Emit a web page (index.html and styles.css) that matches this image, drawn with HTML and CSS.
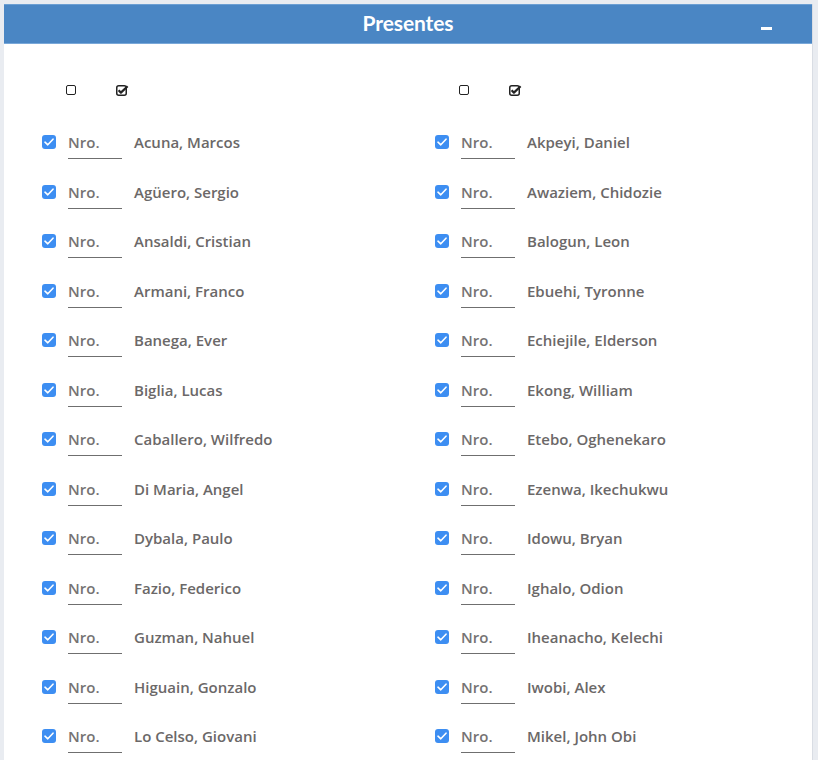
FILE: index.html
```html
<!DOCTYPE html>
<html lang="es">
<head>
<meta charset="utf-8">
<title>Presentes</title>
<link rel="stylesheet" href="styles.css">
</head>
<body>
<div class="page">
  <section class="card">
    <header class="card-head">
      <h2 class="card-title">Presentes</h2>
      <span class="collapse"></span>
    </header>
    <div class="card-body">
      <div class="col">
        <div class="tools">
          <span class="tool-box"></span>
          <svg class="tool-check" width="13" height="11" viewBox="0 0 13 11"><rect x="0.75" y="0.75" width="9.5" height="9.5" rx="2" fill="none" stroke="#222" stroke-width="1.5"/><path d="M2.6 5.3 L4.9 7.6 L11.6 1.2" fill="none" stroke="#222" stroke-width="2.2" stroke-linejoin="round"/></svg>
        </div>
        <ul class="list">
          <li class="row"><span class="cb"><svg width="10" height="8" viewBox="0 0 10 8"><path d="M1 4.2 L3.8 6.8 L9 1.2" fill="none" stroke="#fff" stroke-width="1.6" stroke-linecap="round" stroke-linejoin="round"/></svg></span><span class="nro">Nro.</span><span class="name">Acuna, Marcos</span></li>
          <li class="row"><span class="cb"><svg width="10" height="8" viewBox="0 0 10 8"><path d="M1 4.2 L3.8 6.8 L9 1.2" fill="none" stroke="#fff" stroke-width="1.6" stroke-linecap="round" stroke-linejoin="round"/></svg></span><span class="nro">Nro.</span><span class="name">Agüero, Sergio</span></li>
          <li class="row"><span class="cb"><svg width="10" height="8" viewBox="0 0 10 8"><path d="M1 4.2 L3.8 6.8 L9 1.2" fill="none" stroke="#fff" stroke-width="1.6" stroke-linecap="round" stroke-linejoin="round"/></svg></span><span class="nro">Nro.</span><span class="name">Ansaldi, Cristian</span></li>
          <li class="row"><span class="cb"><svg width="10" height="8" viewBox="0 0 10 8"><path d="M1 4.2 L3.8 6.8 L9 1.2" fill="none" stroke="#fff" stroke-width="1.6" stroke-linecap="round" stroke-linejoin="round"/></svg></span><span class="nro">Nro.</span><span class="name">Armani, Franco</span></li>
          <li class="row"><span class="cb"><svg width="10" height="8" viewBox="0 0 10 8"><path d="M1 4.2 L3.8 6.8 L9 1.2" fill="none" stroke="#fff" stroke-width="1.6" stroke-linecap="round" stroke-linejoin="round"/></svg></span><span class="nro">Nro.</span><span class="name">Banega, Ever</span></li>
          <li class="row"><span class="cb"><svg width="10" height="8" viewBox="0 0 10 8"><path d="M1 4.2 L3.8 6.8 L9 1.2" fill="none" stroke="#fff" stroke-width="1.6" stroke-linecap="round" stroke-linejoin="round"/></svg></span><span class="nro">Nro.</span><span class="name">Biglia, Lucas</span></li>
          <li class="row"><span class="cb"><svg width="10" height="8" viewBox="0 0 10 8"><path d="M1 4.2 L3.8 6.8 L9 1.2" fill="none" stroke="#fff" stroke-width="1.6" stroke-linecap="round" stroke-linejoin="round"/></svg></span><span class="nro">Nro.</span><span class="name">Caballero, Wilfredo</span></li>
          <li class="row"><span class="cb"><svg width="10" height="8" viewBox="0 0 10 8"><path d="M1 4.2 L3.8 6.8 L9 1.2" fill="none" stroke="#fff" stroke-width="1.6" stroke-linecap="round" stroke-linejoin="round"/></svg></span><span class="nro">Nro.</span><span class="name">Di Maria, Angel</span></li>
          <li class="row"><span class="cb"><svg width="10" height="8" viewBox="0 0 10 8"><path d="M1 4.2 L3.8 6.8 L9 1.2" fill="none" stroke="#fff" stroke-width="1.6" stroke-linecap="round" stroke-linejoin="round"/></svg></span><span class="nro">Nro.</span><span class="name">Dybala, Paulo</span></li>
          <li class="row"><span class="cb"><svg width="10" height="8" viewBox="0 0 10 8"><path d="M1 4.2 L3.8 6.8 L9 1.2" fill="none" stroke="#fff" stroke-width="1.6" stroke-linecap="round" stroke-linejoin="round"/></svg></span><span class="nro">Nro.</span><span class="name">Fazio, Federico</span></li>
          <li class="row"><span class="cb"><svg width="10" height="8" viewBox="0 0 10 8"><path d="M1 4.2 L3.8 6.8 L9 1.2" fill="none" stroke="#fff" stroke-width="1.6" stroke-linecap="round" stroke-linejoin="round"/></svg></span><span class="nro">Nro.</span><span class="name">Guzman, Nahuel</span></li>
          <li class="row"><span class="cb"><svg width="10" height="8" viewBox="0 0 10 8"><path d="M1 4.2 L3.8 6.8 L9 1.2" fill="none" stroke="#fff" stroke-width="1.6" stroke-linecap="round" stroke-linejoin="round"/></svg></span><span class="nro">Nro.</span><span class="name">Higuain, Gonzalo</span></li>
          <li class="row"><span class="cb"><svg width="10" height="8" viewBox="0 0 10 8"><path d="M1 4.2 L3.8 6.8 L9 1.2" fill="none" stroke="#fff" stroke-width="1.6" stroke-linecap="round" stroke-linejoin="round"/></svg></span><span class="nro">Nro.</span><span class="name">Lo Celso, Giovani</span></li>
        </ul>
      </div>
      <div class="col">
        <div class="tools">
          <span class="tool-box"></span>
          <svg class="tool-check" width="13" height="11" viewBox="0 0 13 11"><rect x="0.75" y="0.75" width="9.5" height="9.5" rx="2" fill="none" stroke="#222" stroke-width="1.5"/><path d="M2.6 5.3 L4.9 7.6 L11.6 1.2" fill="none" stroke="#222" stroke-width="2.2" stroke-linejoin="round"/></svg>
        </div>
        <ul class="list">
          <li class="row"><span class="cb"><svg width="10" height="8" viewBox="0 0 10 8"><path d="M1 4.2 L3.8 6.8 L9 1.2" fill="none" stroke="#fff" stroke-width="1.6" stroke-linecap="round" stroke-linejoin="round"/></svg></span><span class="nro">Nro.</span><span class="name">Akpeyi, Daniel</span></li>
          <li class="row"><span class="cb"><svg width="10" height="8" viewBox="0 0 10 8"><path d="M1 4.2 L3.8 6.8 L9 1.2" fill="none" stroke="#fff" stroke-width="1.6" stroke-linecap="round" stroke-linejoin="round"/></svg></span><span class="nro">Nro.</span><span class="name">Awaziem, Chidozie</span></li>
          <li class="row"><span class="cb"><svg width="10" height="8" viewBox="0 0 10 8"><path d="M1 4.2 L3.8 6.8 L9 1.2" fill="none" stroke="#fff" stroke-width="1.6" stroke-linecap="round" stroke-linejoin="round"/></svg></span><span class="nro">Nro.</span><span class="name">Balogun, Leon</span></li>
          <li class="row"><span class="cb"><svg width="10" height="8" viewBox="0 0 10 8"><path d="M1 4.2 L3.8 6.8 L9 1.2" fill="none" stroke="#fff" stroke-width="1.6" stroke-linecap="round" stroke-linejoin="round"/></svg></span><span class="nro">Nro.</span><span class="name">Ebuehi, Tyronne</span></li>
          <li class="row"><span class="cb"><svg width="10" height="8" viewBox="0 0 10 8"><path d="M1 4.2 L3.8 6.8 L9 1.2" fill="none" stroke="#fff" stroke-width="1.6" stroke-linecap="round" stroke-linejoin="round"/></svg></span><span class="nro">Nro.</span><span class="name">Echiejile, Elderson</span></li>
          <li class="row"><span class="cb"><svg width="10" height="8" viewBox="0 0 10 8"><path d="M1 4.2 L3.8 6.8 L9 1.2" fill="none" stroke="#fff" stroke-width="1.6" stroke-linecap="round" stroke-linejoin="round"/></svg></span><span class="nro">Nro.</span><span class="name">Ekong, William</span></li>
          <li class="row"><span class="cb"><svg width="10" height="8" viewBox="0 0 10 8"><path d="M1 4.2 L3.8 6.8 L9 1.2" fill="none" stroke="#fff" stroke-width="1.6" stroke-linecap="round" stroke-linejoin="round"/></svg></span><span class="nro">Nro.</span><span class="name">Etebo, Oghenekaro</span></li>
          <li class="row"><span class="cb"><svg width="10" height="8" viewBox="0 0 10 8"><path d="M1 4.2 L3.8 6.8 L9 1.2" fill="none" stroke="#fff" stroke-width="1.6" stroke-linecap="round" stroke-linejoin="round"/></svg></span><span class="nro">Nro.</span><span class="name">Ezenwa, Ikechukwu</span></li>
          <li class="row"><span class="cb"><svg width="10" height="8" viewBox="0 0 10 8"><path d="M1 4.2 L3.8 6.8 L9 1.2" fill="none" stroke="#fff" stroke-width="1.6" stroke-linecap="round" stroke-linejoin="round"/></svg></span><span class="nro">Nro.</span><span class="name">Idowu, Bryan</span></li>
          <li class="row"><span class="cb"><svg width="10" height="8" viewBox="0 0 10 8"><path d="M1 4.2 L3.8 6.8 L9 1.2" fill="none" stroke="#fff" stroke-width="1.6" stroke-linecap="round" stroke-linejoin="round"/></svg></span><span class="nro">Nro.</span><span class="name">Ighalo, Odion</span></li>
          <li class="row"><span class="cb"><svg width="10" height="8" viewBox="0 0 10 8"><path d="M1 4.2 L3.8 6.8 L9 1.2" fill="none" stroke="#fff" stroke-width="1.6" stroke-linecap="round" stroke-linejoin="round"/></svg></span><span class="nro">Nro.</span><span class="name">Iheanacho, Kelechi</span></li>
          <li class="row"><span class="cb"><svg width="10" height="8" viewBox="0 0 10 8"><path d="M1 4.2 L3.8 6.8 L9 1.2" fill="none" stroke="#fff" stroke-width="1.6" stroke-linecap="round" stroke-linejoin="round"/></svg></span><span class="nro">Nro.</span><span class="name">Iwobi, Alex</span></li>
          <li class="row"><span class="cb"><svg width="10" height="8" viewBox="0 0 10 8"><path d="M1 4.2 L3.8 6.8 L9 1.2" fill="none" stroke="#fff" stroke-width="1.6" stroke-linecap="round" stroke-linejoin="round"/></svg></span><span class="nro">Nro.</span><span class="name">Mikel, John Obi</span></li>
        </ul>
      </div>
    </div>
  </section>
</div>
</body>
</html>
```

FILE: styles.css
```css
html, body {
  margin: 0;
  padding: 0;
  height: 100%;
  overflow: hidden;
}
body {
  background: #e9ecf1;
  font-family: "Open Sans", "Liberation Sans", sans-serif;
}
.page {
  padding: 4px 5px 0 4px;
  height: 100%;
  box-sizing: border-box;
}
.card {
  background: #fff;
  height: 100%;
  border-right: 1px solid #d9dde4;
}
.card-head {
  position: relative;
  height: 40px;
  background: #4a86c4;
  border-top: 1px solid #6c9fd3;
  border-bottom: 1px solid #79a8d9;
  box-sizing: border-box;
  display: flex;
  align-items: center;
  justify-content: center;
  padding-bottom: 3px;
}
.card-title {
  margin: 0;
  color: #fff;
  font-family: "Lato", "Open Sans", sans-serif;
  font-weight: 700;
  font-size: 21px;
  line-height: 24px;
  letter-spacing: -0.1px;
}
.collapse {
  position: absolute;
  right: 40px;
  top: 22px;
  width: 11px;
  height: 3px;
  background: #fff;
}
.card-body {
  display: grid;
  grid-template-columns: 393px 1fr;
  padding: 36px 0 0 38px;
}
.tools {
  height: 20px;
  display: flex;
  align-items: center;
  padding-left: 24px;
}
.tool-box {
  width: 8px;
  height: 8px;
  border: 1.5px solid #222;
  border-radius: 2px;
}
.tool-check {
  margin-left: 40px;
}
.list {
  list-style: none;
  margin: 18px 0 0;
  padding: 0;
}
.row {
  height: 49.5px;
  display: flex;
  align-items: flex-start;
  padding-top: 14px;
  box-sizing: border-box;
  font-size: 15px;
  font-weight: 600;
  line-height: 20px;
  color: #6b6868;
}
.cb {
  width: 14px;
  height: 14px;
  margin-top: 3px;
  border-radius: 3px;
  background: #3d8ef2;
  display: flex;
  align-items: center;
  justify-content: center;
}
.nro {
  width: 54px;
  margin-left: 12px;
  padding-bottom: 6px;
  border-bottom: 1px solid #6f6f6f;
  color: #767373;
}
.name {
  margin-left: 12px;
}
```
